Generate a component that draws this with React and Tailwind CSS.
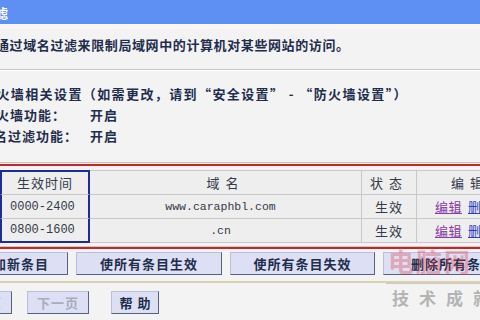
import React from "react";

const cjk = { fontFamily: '"Noto Sans CJK SC", "Noto Sans", sans-serif' };

function Btn({ children, className = "", dim = false }) {
  return (
    <div
      className={
        "h-[23px] shrink-0 flex items-center justify-center bg-[#dde0f4] border border-t-[#b8c0d8] border-l-[#b8c0d8] border-r-[#56627e] border-b-[#56627e] text-[13px] font-bold tracking-[1px] " +
        (dim ? "text-[#a8acc0] " : "text-[#1f2d4d] ") +
        className
      }
    >
      {children}
    </div>
  );
}

export default function App() {
  const rows = [
    { t: "0000-2400", d: "www.caraphbl.com" },
    { t: "0800-1600", d: ".cn" },
  ];
  return (
    <div
      className="relative w-[480px] h-[320px] overflow-hidden bg-[#f3f3f3] text-[#1f2d4d]"
      style={cjk}
    >
      {/* header */}
      <div className="h-[24px] bg-[#5e90f4] flex items-center">
        <span className="ml-[-47px] text-white font-bold text-[13px] tracking-[1px] leading-none">
          域名过滤
        </span>
      </div>
      <div className="h-[5px] bg-[#fbf5f8]" />

      {/* description */}
      <div className="h-[41px] pt-[8px] border-b border-[#c6c6c6]">
        <div className="ml-[-4px] text-[13px] leading-[16px] font-bold tracking-[0.6px] whitespace-nowrap">
          通过域名过滤来限制局域网中的计算机对某些网站的访问。
        </div>
      </div>
      <div className="h-px bg-white" />

      {/* settings */}
      <div className="h-[91px] pt-[12px]">
        <div className="ml-[-18px] text-[13px] leading-[21px] font-bold tracking-[1.4px] whitespace-nowrap">
          防火墙相关设置（如需更改，请到“安全设置” - “防火墙设置”）
        </div>
        <div className="ml-[-18px] flex text-[13px] leading-[21px] font-bold tracking-[1px] whitespace-nowrap">
          <span className="w-[108px]">防火墙功能：</span>
          <span>开启</span>
        </div>
        <div className="ml-[-18px] flex text-[13px] leading-[21px] font-bold tracking-[1px] whitespace-nowrap">
          <span className="w-[108px] ml-[-2px] mr-[2px]">域名过滤功能：</span>
          <span>开启</span>
        </div>
      </div>
      <div className="h-px bg-[#cdc6c0]" />
      <div className="h-px bg-[#f6eeee]" />
      <div className="h-[2px] bg-[#c4282c]" />
      <div className="h-[4px]" />

      {/* table */}
      <div className="w-[513px] grid grid-cols-[90px_272px_55px_96px] text-[13px] text-[#333a4a]">
        <div className="h-[25px] flex items-center justify-center border-2 border-b border-[#1c2c98] border-b-[#c8c8c8] bg-[#eeeeee] tracking-[1px]">
          生效时间
        </div>
        <div className="h-[25px] flex items-center justify-center border-t border-b border-r border-[#c8c8c8] bg-[#eeeeee] tracking-[6px]">
          域名
        </div>
        <div className="h-[25px] flex items-center justify-center border-t border-b border-r border-[#c8c8c8] bg-[#eeeeee] tracking-[6px]">
          状态
        </div>
        <div className="h-[25px] flex items-center justify-center border-t border-b border-[#c8c8c8] bg-[#eeeeee] tracking-[6px] pl-[10px]">
          编辑
        </div>
        {rows.map((r, i) => (
          <React.Fragment key={i}>
            <div
              className={
                "h-[24px] flex items-center pl-[8px] border-l-2 border-r-2 border-[#1c2c98] bg-[#eeeeee] text-[12px] " +
                (i === rows.length - 1 ? "border-b-2" : "border-b border-b-[#c8c8c8]")
              }
              style={{ fontFamily: '"Liberation Mono", monospace' }}
            >
              {r.t}
            </div>
            <div
              className="h-[24px] flex items-center justify-center pr-[10px] border-b border-r border-[#c8c8c8] bg-[#eeeeee] text-[11.5px]"
              style={{ fontFamily: '"Liberation Mono", monospace' }}
            >
              {r.d}
            </div>
            <div className="h-[24px] flex items-center justify-center border-b border-r border-[#c8c8c8] bg-[#eeeeee] tracking-[1px]">
              生效
            </div>
            <div className="h-[24px] flex items-center justify-center gap-[6px] border-b border-[#c8c8c8] bg-[#eeeeee] tracking-[0.5px]">
              <span className="text-[#8a3ca8] underline">编辑</span>
              <span className="text-[#2a3cc0] underline">删除</span>
            </div>
          </React.Fragment>
        ))}
      </div>

      <div className="h-[3px]" />
      <div className="h-px bg-[#cdc6c0]" />
      <div className="h-[2px] bg-[#c4282c]" />
      <div className="h-[3px]" />

      {/* buttons row 1 */}
      <div className="flex gap-[8px] ml-[-40px] whitespace-nowrap">
        <Btn className="w-[108px]">添加新条目</Btn>
        <Btn className="w-[146px]">使所有条目生效</Btn>
        <Btn className="w-[145px]">使所有条目失效</Btn>
        <Btn className="w-[140px]">删除所有条目</Btn>
      </div>

      <div className="h-[6px]" />
      <div className="h-[2px] bg-[#ddd0ae]" />
      <div className="h-[8px]" />

      {/* buttons row 2 */}
      <div className="flex ml-[-50px] whitespace-nowrap">
        <Btn className="w-[62px]" dim>上一页</Btn>
        <Btn className="w-[62px] ml-[15px]" dim>下一页</Btn>
        <Btn className="w-[48px] ml-[22px] tracking-[5px] pl-[5px]">帮助</Btn>
      </div>

      {/* watermark */}
      <div className="absolute left-[388px] top-[244px] w-[100px] h-[34px] flex items-center text-[26px] font-bold text-[#e04050] opacity-35 tracking-[2px] leading-none">
        电脑网
      </div>
      <div className="absolute left-[386px] top-[283px] w-[100px] h-px bg-[#c8c8c8]" />
      <div className="absolute left-[392px] top-[289px] text-[17px] font-bold text-[#b4b4b4] tracking-[10px] whitespace-nowrap leading-none">
        技术成就
      </div>
    </div>
  );
}
